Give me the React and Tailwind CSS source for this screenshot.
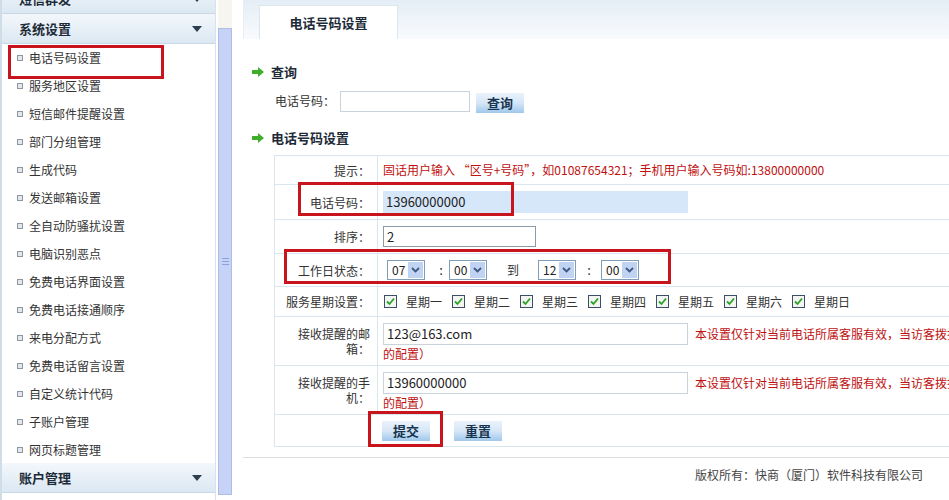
import React from 'react';

const menuItems = [
  '电话号码设置',
  '服务地区设置',
  '短信邮件提醒设置',
  '部门分组管理',
  '生成代码',
  '发送邮箱设置',
  '全自动防骚扰设置',
  '电脑识别恶点',
  '免费电话界面设置',
  '免费电话接通顺序',
  '来电分配方式',
  '免费电话留言设置',
  '自定义统计代码',
  '子账户管理',
  '网页标题管理',
];

const weekDays = ['星期一', '星期二', '星期三', '星期四', '星期五', '星期六', '星期日'];

const DownTri = () => (
  <svg width="10" height="6" viewBox="0 0 10 6">
    <path d="M0 0 L10 0 L5 6 Z" fill="#2f3e4e" />
  </svg>
);

const GreenArrow = () => (
  <svg width="12" height="10" viewBox="0 0 12 10">
    <path d="M0 3 H6 V0 L12 5 L6 10 V7 H0 Z" fill="#3fae2a" />
  </svg>
);

const MenuHeader = ({ title, className = '' }) => (
  <div
    className={`flex items-center justify-between h-[30px] pl-[17px] pr-[13px] bg-gradient-to-b from-[#f3f7fb] to-[#dbe8f3] border-b border-[#c7d8e6] ${className}`}
  >
    <span className="text-[13px] font-bold text-[#1d2b38]">{title}</span>
    <DownTri />
  </div>
);

const Select = ({ value }) => (
  <div className="flex items-center h-[20px] w-[38px] border border-[#7f9db9] bg-white pl-[4px] pr-[1px]">
    <span className="text-[12px] text-[#222] leading-none flex-1">{value}</span>
    <div className="w-[15px] h-[16px] bg-[#c1d3f3] flex items-center justify-center">
      <svg width="9" height="6" viewBox="0 0 9 6">
        <path d="M1 1 L4.5 4.5 L8 1" stroke="#3e5780" strokeWidth="1.8" fill="none" />
      </svg>
    </div>
  </div>
);

const CheckBox = () => (
  <svg width="13" height="13" viewBox="0 0 13 13">
    <rect x="0.5" y="0.5" width="12" height="12" fill="#f4f4f0" stroke="#3b5068" />
    <path d="M3 6.5 L5.5 9 L10 3.5" stroke="#28a428" strokeWidth="1.8" fill="none" />
  </svg>
);

const Btn = ({ children }) => (
  <button className="w-[48px] h-[20px] bg-gradient-to-b from-[#eaf2fb] via-[#d6e6f6] to-[#9fc8ec] text-[13px] font-bold text-[#173550] leading-none">
    {children}
  </button>
);

const Row = ({ label, h, children, labelClass = '' }) => (
  <div className={`flex border-b border-[#d9e6ee] ${h}`}>
    <div
      className={`w-[103px] shrink-0 border-r border-[#d9e6ee] flex items-center justify-end pr-[7px] pl-[19px] text-right text-[12px] text-[#333] leading-[15px] ${labelClass}`}
    >
      {label}
    </div>
    <div className="flex-1 pl-[5px] flex items-center">{children}</div>
  </div>
);

const NoticeCell = ({ value }) => (
  <div className="flex flex-col justify-center w-full pt-[3px]">
    <div className="flex items-center">
      <div className="w-[305px] h-[22px] border border-[#c8d3dc] bg-white flex items-center px-[3px] text-[13px] text-[#222]">
        {value}
      </div>
      <span className="ml-[7px] text-[12px] text-[#c01010] whitespace-nowrap">
        本设置仅针对当前电话所属客服有效，当访客拨打该电话后将发送提醒
      </span>
    </div>
    <span className="text-[12px] text-[#c01010] leading-[16px] mt-[1px]">的配置）</span>
  </div>
);

export default function App() {
  return (
    <div className="relative flex w-[949px] h-[500px] overflow-hidden bg-white font-['Noto_Sans_CJK_SC','Noto_Sans',sans-serif]">
      {/* 左侧菜单 */}
      <div className="w-[216px] shrink-0 border-l-2 border-[#cfdde8] border-r border-r-[#d7e3ec] flex flex-col">
        <MenuHeader title="短信群发" className="-mt-[16px]" />
        <MenuHeader title="系统设置" />
        <div className="flex flex-col">
          {menuItems.map((item) => (
            <div key={item} className="flex items-center h-[28px] pl-[15px] gap-[6px]">
              <span className="w-[6px] h-[6px] border border-[#8d969e] bg-[#e4e8ec]" />
              <span className="text-[12px] text-[#333]">{item}</span>
            </div>
          ))}
        </div>
        <MenuHeader title="账户管理" className="mt-[-1px]" />
      </div>

      {/* 滚动条 */}
      <div className="w-[16px] shrink-0 flex flex-col pl-[2px]">
        <div className="h-[28px] bg-[#f7f5f0]" />
        <div className="flex-1 mb-[5px] bg-[#c6d3f6] border border-[#aebde8] flex items-center justify-center">
          <div className="flex flex-col gap-[2px]">
            <div className="w-[7px] h-px bg-[#8ea2d8]" />
            <div className="w-[7px] h-px bg-[#8ea2d8]" />
            <div className="w-[7px] h-px bg-[#8ea2d8]" />
          </div>
        </div>
      </div>

      {/* 主体 */}
      <div className="ml-[11px] flex-1 flex flex-col min-w-0">
        <div className="h-[39px] bg-gradient-to-b from-[#e4edf6] to-[#f9fbfd] flex items-end pl-[15px] border-l border-[#e8eef3]">
          <div className="w-[139px] h-[34px] bg-white border border-b-0 border-[#dde6ee] flex items-center justify-center text-[13px] font-bold text-[#1d2b38]">
            电话号码设置
          </div>
        </div>

        <div className="pl-[9px] pt-[25px]">
          <div className="flex items-center gap-[7px] h-[16px]">
            <GreenArrow />
            <span className="text-[13px] font-bold text-[#1d2b38]">查询</span>
          </div>
          <div className="flex items-center mt-[11px] pl-[23px] h-[20px]">
            <span className="text-[12px] text-[#333] w-[65px]">电话号码：</span>
            <div className="w-[130px] h-[21px] border border-[#c8d3dc] bg-white" />
            <div className="ml-[6px]">
              <Btn>查询</Btn>
            </div>
          </div>
          <div className="flex items-center gap-[7px] h-[16px] mt-[19px]">
            <GreenArrow />
            <span className="text-[13px] font-bold text-[#1d2b38]">电话号码设置</span>
          </div>

          <div className="ml-[22px] mt-[9px] w-[760px] border-l border-t border-[#d9e6ee]">
            <Row label="提示：" h="h-[29px]">
              <span className="text-[12px] text-[#c01010] whitespace-nowrap">
                固话用户输入 “区号+号码”，如01087654321；手机用户输入号码如:13800000000
              </span>
            </Row>
            <Row label="电话号码：" h="h-[35px]">
              <div className="w-[305px] h-[22px] bg-[#d6e7f9] flex items-center px-[3px] text-[13px] text-[#222]">
                13960000000
              </div>
            </Row>
            <Row label="排序：" h="h-[34px]">
              <div className="w-[153px] h-[21px] border border-[#8a9aa8] bg-white flex items-center px-[3px] text-[13px] text-[#222]">
                2
              </div>
            </Row>
            <Row label="工作日状态：" h="h-[33px]" labelClass="whitespace-nowrap">
              <div className="flex items-center pl-[4px]">
                <Select value="07" />
                <span className="ml-[10px] mr-[2px] w-[12px] text-center text-[13px] text-[#333]">:</span>
                <Select value="00" />
                <span className="ml-[20px] mr-[19px] text-[12px] text-[#333]">到</span>
                <Select value="12" />
                <span className="ml-[7px] mr-[6px] w-[12px] text-center text-[13px] text-[#333]">:</span>
                <Select value="00" />
              </div>
            </Row>
            <Row label="服务星期设置：" h="h-[30px]" labelClass="pl-[0px] whitespace-nowrap">
              <div className="flex items-center pl-[1px]">
                {weekDays.map((d) => (
                  <div key={d} className="flex items-center w-[68px]">
                    <CheckBox />
                    <span className="ml-[9px] text-[12px] text-[#333]">{d}</span>
                  </div>
                ))}
              </div>
            </Row>
            <Row label="接收提醒的邮箱：" h="h-[49px]">
              <NoticeCell value="123@163.com" />
            </Row>
            <Row label="接收提醒的手机：" h="h-[49px]">
              <NoticeCell value="13960000000" />
            </Row>
            <Row label="" h="h-[32px]" labelClass="border-r-0">
              <div className="flex items-center gap-[24px] -ml-[1px]">
                <Btn>提交</Btn>
                <Btn>重置</Btn>
              </div>
            </Row>
          </div>
        </div>

        <div className="mt-[10px] border-t border-[#dcdcdc] pt-[8px] pl-[452px] text-[12px] text-[#444] whitespace-nowrap">
          版权所有：快商（厦门）软件科技有限公司
        </div>
      </div>

      {/* 标注框 */}
      <div className="absolute left-[8px] top-[45px] w-[156px] h-[34px] border-[3px] border-[#c8141c]" />
      <div className="absolute left-[298px] top-[182px] w-[216px] h-[34px] border-[3px] border-[#c8141c]" />
      <div className="absolute left-[284px] top-[249px] w-[387px] h-[35px] border-[3px] border-[#c8141c]" />
      <div className="absolute left-[368px] top-[411px] w-[75px] h-[36px] border-[3px] border-[#c8141c]" />
    </div>
  );
}
